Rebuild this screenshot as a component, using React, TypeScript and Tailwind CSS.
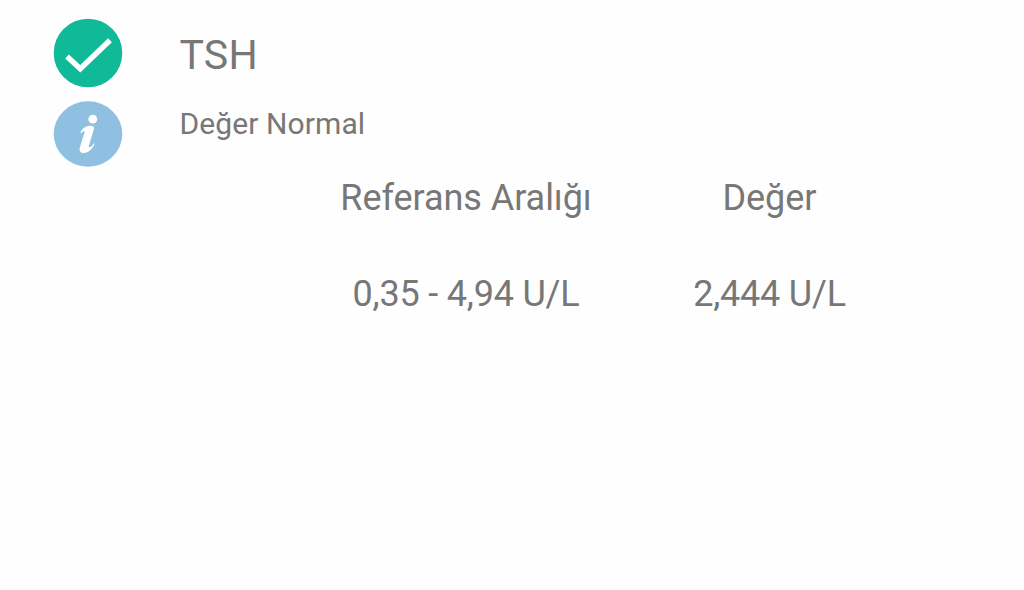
const columns = [
  { label: "Referans Aralığı", value: "0,35 - 4,94 U/L", width: "w-[252px]" },
  { label: "Değer", value: "2,444 U/L", width: "w-[154px]" },
];

const CheckIcon = () => (
  <svg width="70" height="70" viewBox="0 0 70 70" fill="none">
    <circle cx="35" cy="35" r="34.3" fill="#10ba99" />
    <path d="M14 38.5 L27.3 50.8 L57 22.2" stroke="#fff" strokeWidth="5.4" />
  </svg>
);

const InfoIcon = () => (
  <svg width="70" height="66" viewBox="0 0 70 66" fill="none">
    <ellipse cx="35" cy="33" rx="34.3" ry="32.7" fill="#8fbfe1" />
    <circle cx="39.8" cy="18.2" r="4.4" fill="#fff" />
    <path
      d="M27.3 31.5 C29.5 27.5 32 25.5 35 25 C38.5 24.3 41.8 25 40.8 28.5 L35.8 45 C35.2 47.5 38.5 46 40.8 42.2 L41.6 43 C38.8 48.8 34.8 52 30.5 52 C27 52 26 49.5 27 46 L31.5 31.5 C32.2 28.8 30.5 29.5 28.3 32.3 Z"
      fill="#fff"
    />
  </svg>
);

export default function App() {
  return (
    <div className="flex h-[590px] w-full bg-[#fefefe] font-[Roboto,sans-serif] text-[#777]">
      <div className="flex w-[179.5px] flex-col gap-[13px] pt-[18px] pl-[53px]">
        <CheckIcon />
        <InfoIcon />
      </div>
      <div className="flex-1 pt-[30px]">
        <h1 className="text-[41px] leading-[50px] tracking-[0.2px]">TSH</h1>
        <p className="mt-[26px] text-[30px] leading-[36px] tracking-[0.1px]">Değer Normal</p>
        <div className="mt-[34px] flex gap-[100.5px] pl-[160.5px]">
          {columns.map((col) => (
            <div key={col.label} className={`flex flex-col items-center gap-[52px] text-[36px] leading-[44px] whitespace-nowrap ${col.width}`}>
              <span className="tracking-[-0.05px]">{col.label}</span>
              <span className="tracking-[-0.2px]">{col.value}</span>
            </div>
          ))}
        </div>
      </div>
    </div>
  );
}
